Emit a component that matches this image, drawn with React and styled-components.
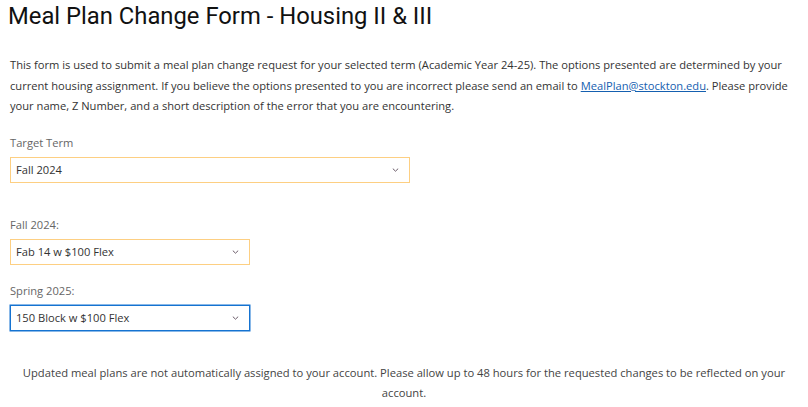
import React from "react";
import styled, { createGlobalStyle } from "styled-components";

const GlobalStyle = createGlobalStyle`
  body {
    margin: 0;
    background: #fff;
    font-family: "Open Sans", "Liberation Sans", sans-serif;
  }
`;

const fields = [
  { label: "Fall 2024:", value: "Fab 14 w $100 Flex", width: 240 },
  { label: "Spring 2025:", value: "150 Block w $100 Flex", width: 240, focused: true },
];

function Chevron() {
  return (
    <svg width="7" height="4" viewBox="0 0 7 4">
      <path d="M0.8 0.6 L3.5 3.2 L6.2 0.6" fill="none" stroke="#6a5a68" strokeWidth="1" />
    </svg>
  );
}

function SelectField({ label, value, width, focused }) {
  return (
    <Field>
      <Label>{label}</Label>
      <SelectBox $width={width} $focused={focused}>
        <span>{value}</span>
        <Chevron />
      </SelectBox>
    </Field>
  );
}

function App() {
  return (
    <Page>
      <GlobalStyle />
      <Title>Meal Plan Change Form - Housing II &amp; III</Title>
      <Intro>
        This form is used to submit a meal plan change request for your selected
        term (Academic Year 24-25). The options presented are determined by your
        current housing assignment. If you believe the options presented to you
        are incorrect please send an email to{" "}
        <MailLink href="#">MealPlan@stockton.edu</MailLink>. Please provide your
        name, Z Number, and a short description of the error that you are
        encountering.
      </Intro>
      <SelectField label="Target Term" value="Fall 2024" width={400} />
      <Spacer />
      {fields.map((f) => (
        <SelectField key={f.label} {...f} />
      ))}
      <Note>
        Updated meal plans are not automatically assigned to your account. Please
        allow up to 48 hours for the requested changes to be reflected on your
        account.
      </Note>
    </Page>
  );
}

const Page = styled.div`
  padding: 2px 10px 0 10px;
  display: flex;
  flex-direction: column;
  align-items: flex-start;
`;

const Title = styled.h1`
  margin: 0 0 0 -2px;
  font-family: Roboto, "Liberation Sans", sans-serif;
  font-weight: 400;
  font-size: 23.8px;
  line-height: 28px;
  color: #111;
`;

const Intro = styled.p`
  margin: 25px 0 16px;
  font-size: 11.15px;
  line-height: 20.5px;
  color: #333;
`;

const MailLink = styled.a`
  color: #1560b0;
  text-decoration: underline;
`;

const Field = styled.div`
  display: flex;
  flex-direction: column;
  gap: 4px;
  margin-bottom: 16px;
`;

const Label = styled.div`
  font-size: 11.15px;
  line-height: 20px;
  color: #666;
`;

const SelectBox = styled.div`
  box-sizing: border-box;
  width: ${(p) => p.$width}px;
  height: 26px;
  display: flex;
  align-items: center;
  justify-content: space-between;
  padding: 0 10px 0 5px;
  border: 1px solid ${(p) => (p.$focused ? "#1573d1" : "#fdcf82")};
  box-shadow: ${(p) => (p.$focused ? "0 0 0 0.5px #1573d1" : "none")};
  font-size: 11.15px;
  color: #333;
  background: #fff;
`;

const Spacer = styled.div`
  height: 16px;
`;

const Note = styled.p`
  align-self: stretch;
  margin: 16px 0 0;
  text-align: center;
  font-size: 11.2px;
  line-height: 20px;
  color: #444;
`;

export default App;
